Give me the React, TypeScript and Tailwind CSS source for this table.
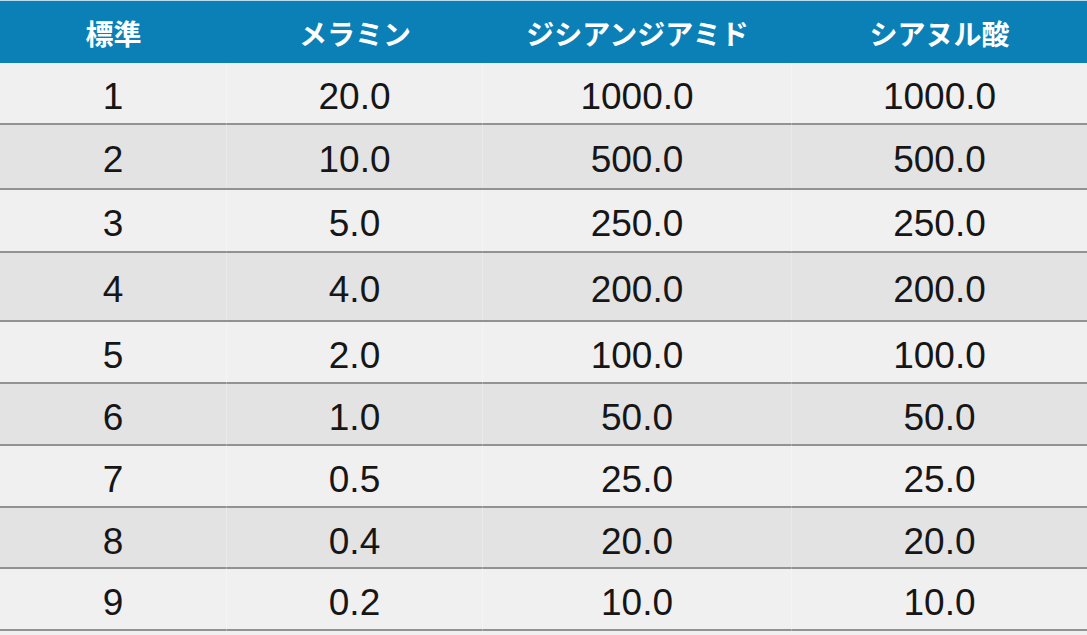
const headers = ["標準", "メラミン", "ジシアンジアミド", "シアヌル酸"];

const rows = [
  { h: "h-[60px]", v: ["1", "20.0", "1000.0", "1000.0"] },
  { h: "h-[63px]", v: ["2", "10.0", "500.0", "500.0"] },
  { h: "h-[61px]", v: ["3", "5.0", "250.0", "250.0"] },
  { h: "h-[67px]", v: ["4", "4.0", "200.0", "200.0"] },
  { h: "h-[60px]", v: ["5", "2.0", "100.0", "100.0"] },
  { h: "h-[60px]", v: ["6", "1.0", "50.0", "50.0"] },
  { h: "h-[60px]", v: ["7", "0.5", "25.0", "25.0"] },
  { h: "h-[59px]", v: ["8", "0.4", "20.0", "20.0"] },
  { h: "h-[60px]", v: ["9", "0.2", "10.0", "10.0"] },
];

const cols = "grid grid-cols-[227px_256px_309px_295px]";

export default function App() {
  return (
    <div className="w-[1087px] h-[635px] overflow-hidden bg-[#f1f0f0]">
      {/* Header */}
      <div className={`${cols} h-[63px] bg-[#0a80b7] border-t border-[#b9dced]`}>
        {headers.map((t) => (
          <div
            key={t}
            className="flex items-center justify-center pt-[2px] text-[28px] font-bold text-white [font-family:'Noto_Sans_CJK_JP',sans-serif]"
          >
            {t}
          </div>
        ))}
      </div>

      {/* Body */}
      {rows.map((r, i) => (
        <div
          key={i}
          className={`${cols} ${r.h} box-content border-b-2 border-[#929292] ${
            i % 2 === 0 ? "bg-[#f1f0f0]" : "bg-[#e3e3e3]"
          }`}
        >
          {r.v.map((c, j) => (
            <div
              key={j}
              className={`flex items-center justify-center pt-[6px] text-[37px] text-[#161616] [font-family:'Liberation_Sans',Arial,sans-serif] ${
                j < 3 ? "border-r border-white/25" : ""
              }`}
            >
              {c}
            </div>
          ))}
        </div>
      ))}
    </div>
  );
}
